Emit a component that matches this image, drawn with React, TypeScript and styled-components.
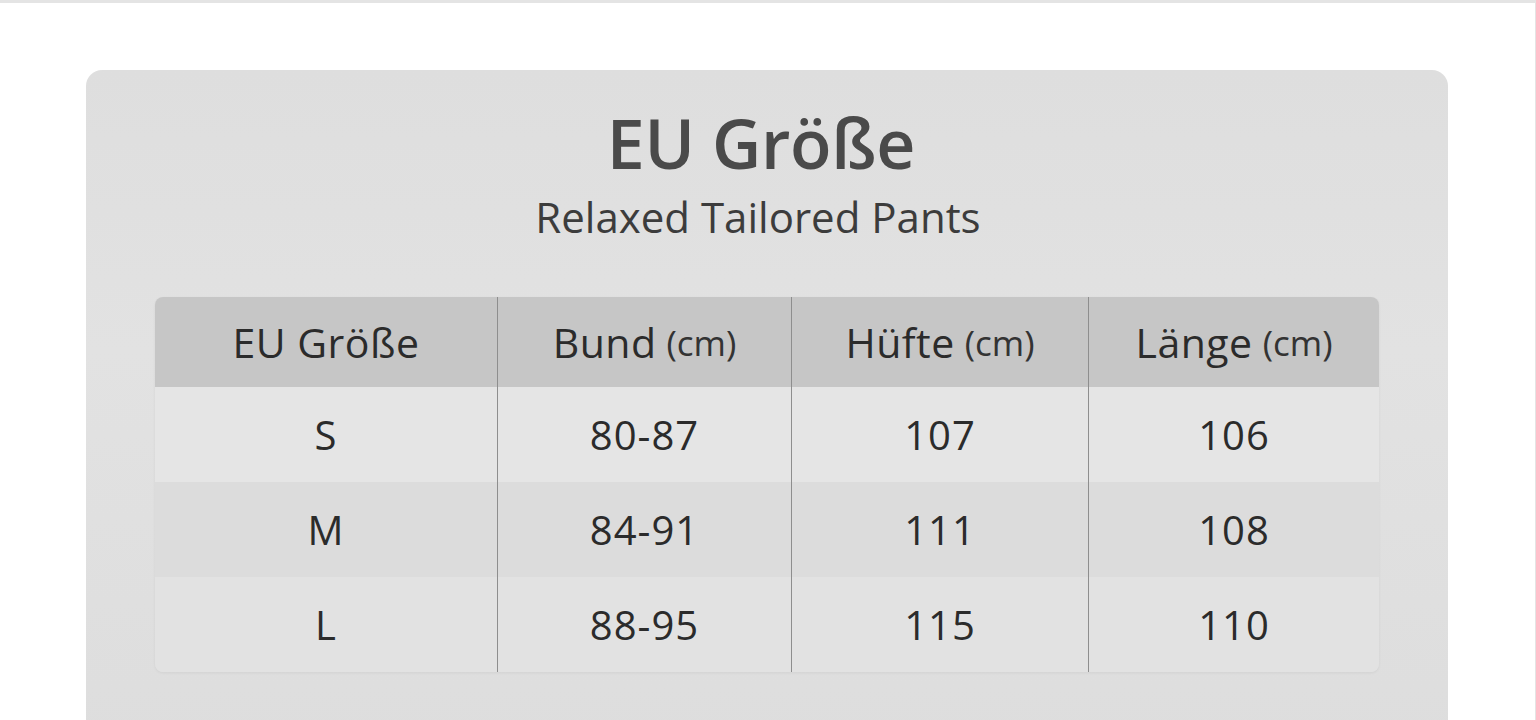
import React from "react";
import styled, {createGlobalStyle} from "styled-components";

const GlobalStyle = createGlobalStyle`
  html, body {
    margin: 0;
    padding: 0;
    background: #fff;
  }

  body {
    font-family: "Open Sans", "Noto Sans", sans-serif;
  }
`;

const Page = styled.div`
  height: 720px;
  box-sizing: border-box;
  border-top: 3px solid #e4e4e4;
  border-right: 1px solid #e4e4e4;
  padding: 67px 87px 0 86px;
  overflow: hidden;
`;

const Card = styled.section`
  background: linear-gradient(180deg, #dedede 0%, #e2e2e2 40%, #dddddd 100%);
  border-radius: 16px 16px 0 0;
  padding: 33px 69px 60px;
  min-height: 700px;
  box-sizing: border-box;
`;

const Title = styled.h1`
  margin: 0;
  padding-right: 12px;
  text-align: center;
  font-size: 68px;
  line-height: 80px;
  font-weight: 600;
  color: #4a4a4a;
  letter-spacing: -0.3px;
`;

const Subtitle = styled.h2`
  margin: 9px 0 0;
  padding-right: 18px;
  text-align: center;
  font-size: 42px;
  line-height: 50px;
  font-weight: 400;
  color: #3c3c3c;
`;

const Table = styled.div`
  margin-top: 55px;
  display: grid;
  grid-template-columns: 343px 294px 297px 290px;
  border-radius: 8px;
  overflow: hidden;
  box-shadow: 0 1px 3px rgba(0, 0, 0, 0.06);
`;

const Cell = styled.div<{ $bg: string; $head?: boolean; $last?: boolean }>`
  background: ${p => p.$bg};
  height: ${p => (p.$head ? "90px" : "95px")};
  display: flex;
  align-items: center;
  justify-content: center;
  border-right: ${p => (p.$last ? "none" : "1.5px solid #8e8e8e")};
  font-size: ${p => (p.$head ? "41px" : "40px")};
  font-weight: ${p => (p.$head ? 500 : 400)};
  letter-spacing: ${p => (p.$head ? "0.5px" : "1px")};
  color: #2b2b2b;
  box-sizing: border-box;
`;

const Unit = styled.span`
  font-size: 35px;
  font-weight: 400;
  margin-left: 10px;
  letter-spacing: 0;
  color: #333;
`;

const headers: { label: string; unit?: string }[] = [
    {label: "EU Größe"},
    {label: "Bund", unit: "(cm)"},
    {label: "Hüfte", unit: "(cm)"},
    {label: "Länge", unit: "(cm)"},
];

const rows = [
    ["S", "80-87", "107", "106"],
    ["M", "84-91", "111", "108"],
    ["L", "88-95", "115", "110"],
];

const rowBg = ["#e5e5e5", "#dcdcdc", "#e2e2e2"];

export default function App() {
    return (
        <>
            <GlobalStyle/>
            <Page>
                <Card>
                    <Title>EU Größe</Title>
                    <Subtitle>Relaxed Tailored Pants</Subtitle>
                    <Table>
                        {headers.map((h, i) => (
                            <Cell key={h.label} $bg="#c6c6c6" $head $last={i === headers.length - 1}>
                                {h.label}
                                {h.unit && <Unit>{h.unit}</Unit>}
                            </Cell>
                        ))}
                        {rows.map((r, ri) =>
                            r.map((v, ci) => (
                                <Cell key={ri + "-" + ci} $bg={rowBg[ri]} $last={ci === r.length - 1}>
                                    {v}
                                </Cell>
                            ))
                        )}
                    </Table>
                </Card>
            </Page>
        </>
    );
}
